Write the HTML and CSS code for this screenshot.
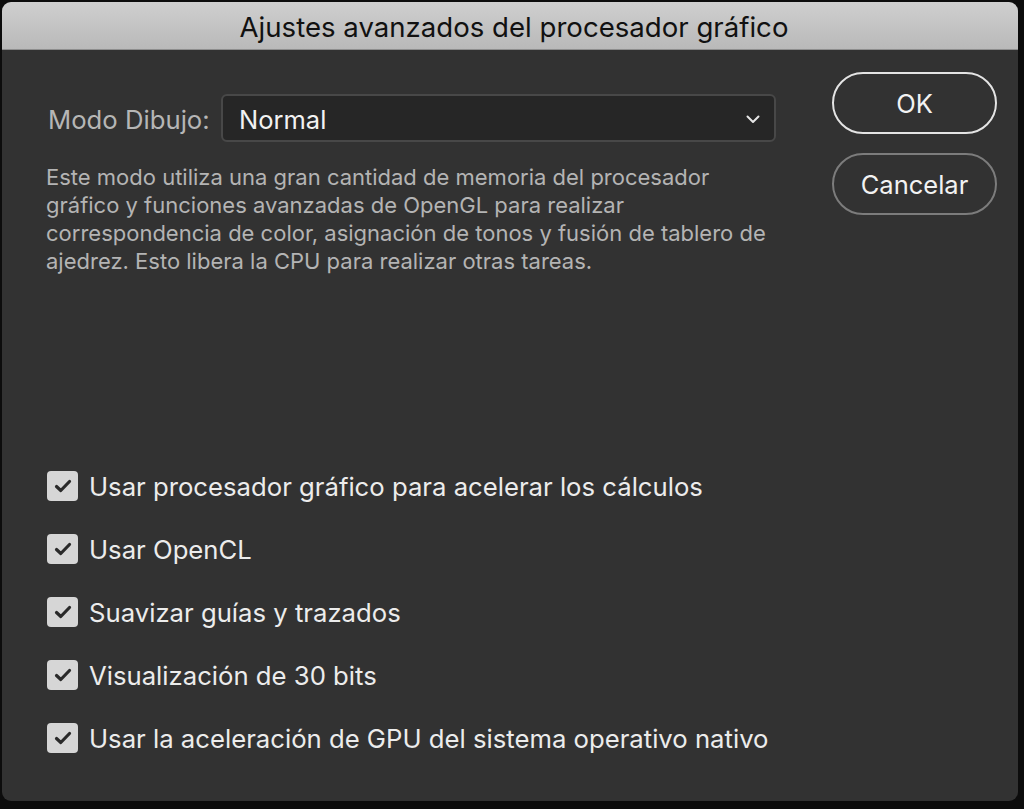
FILE: index.html
```html
<!DOCTYPE html>
<html lang="es">
<head>
<meta charset="utf-8">
<title>Ajustes avanzados del procesador gráfico</title>
<link rel="stylesheet" href="styles.css">
</head>
<body>
<div class="window">
  <div class="titlebar">Ajustes avanzados del procesador gráfico</div>
  <div class="content">
    <div class="main">
      <div class="mode-row">
        <span class="mode-label">Modo Dibujo:</span>
        <div class="select">
          <span class="select-value">Normal</span>
          <svg class="chevron" width="14" height="9" viewBox="0 0 14 9"><path d="M1.5 1.5 L7 7 L12.5 1.5" fill="none" stroke="#e6e6e6" stroke-width="2" stroke-linecap="round" stroke-linejoin="round"/></svg>
        </div>
      </div>
      <p class="desc">Este modo utiliza una gran cantidad de memoria del procesador gráfico y funciones avanzadas de OpenGL para realizar correspondencia de color, asignación de tonos y fusión de tablero de ajedrez. Esto libera la CPU para realizar otras tareas.</p>
      <ul class="checks">
        <li class="check"><span class="box"><svg width="18" height="14" viewBox="0 0 18 14"><path d="M2.5 7.5 L6.8 11.5 L15.5 2.5" fill="none" stroke="#2a2a2a" stroke-width="3.2" stroke-linecap="round" stroke-linejoin="round"/></svg></span>Usar procesador gráfico para acelerar los cálculos</li>
        <li class="check"><span class="box"><svg width="18" height="14" viewBox="0 0 18 14"><path d="M2.5 7.5 L6.8 11.5 L15.5 2.5" fill="none" stroke="#2a2a2a" stroke-width="3.2" stroke-linecap="round" stroke-linejoin="round"/></svg></span>Usar OpenCL</li>
        <li class="check"><span class="box"><svg width="18" height="14" viewBox="0 0 18 14"><path d="M2.5 7.5 L6.8 11.5 L15.5 2.5" fill="none" stroke="#2a2a2a" stroke-width="3.2" stroke-linecap="round" stroke-linejoin="round"/></svg></span>Suavizar guías y trazados</li>
        <li class="check"><span class="box"><svg width="18" height="14" viewBox="0 0 18 14"><path d="M2.5 7.5 L6.8 11.5 L15.5 2.5" fill="none" stroke="#2a2a2a" stroke-width="3.2" stroke-linecap="round" stroke-linejoin="round"/></svg></span>Visualización de 30 bits</li>
        <li class="check"><span class="box"><svg width="18" height="14" viewBox="0 0 18 14"><path d="M2.5 7.5 L6.8 11.5 L15.5 2.5" fill="none" stroke="#2a2a2a" stroke-width="3.2" stroke-linecap="round" stroke-linejoin="round"/></svg></span>Usar la aceleración de GPU del sistema operativo nativo</li>
      </ul>
    </div>
    <div class="actions">
      <button class="btn btn-ok">OK</button>
      <button class="btn btn-cancel">Cancelar</button>
    </div>
  </div>
</div>
</body>
</html>
```
FILE: styles.css
```css
html, body {
  margin: 0;
  padding: 0;
  background: #0c0c0c;
  height: 100%;
}
body {
  font-family: Inter, "Liberation Sans", Arial, sans-serif;
  overflow: hidden;
}
.window {
  margin: 2px 0 0 2px;
  width: 1016px;
  height: 799px;
  border-radius: 9px;
  overflow: hidden;
  background: #323232;
  display: flex;
  flex-direction: column;
}
.titlebar {
  height: 48px;
  box-sizing: border-box;
  flex: none;
  background: linear-gradient(#cfcfcf, #b9b9b9);
  border-bottom: 1px solid #8e8e8e;
  color: #111;
  font-size: 27.6px;
  line-height: 50px;
  text-align: center;
  padding-left: 8px;
}
.content {
  flex: 1;
  display: flex;
  padding: 22px 21px 0 43px;
}
.main {
  flex: 1;
  display: flex;
  flex-direction: column;
}
.mode-row {
  display: flex;
  align-items: center;
  margin-top: 22px;
}
.mode-label {
  color: #b6b6b6;
  font-size: 25.7px;
  margin-left: 3px;
  width: 173px;
  padding-top: 3px;
  white-space: nowrap;
}
.select {
  width: 555px;
  height: 48px;
  box-sizing: border-box;
  border: 2px solid #484848;
  border-radius: 6px;
  background: #262626;
  display: flex;
  align-items: center;
  justify-content: space-between;
  padding: 3px 14px 0 16px;
}
.select-value {
  color: #f2f2f2;
  font-size: 25.5px;
}
.chevron { margin-top: -1px; }
.desc {
  margin: 21px 0 0 1px;
  width: 730px;
  color: #b4b4b4;
  font-size: 22px;
  line-height: 28px;
}
.checks {
  list-style: none;
  margin: 196px 0 0 0;
  padding: 0;
  display: flex;
  flex-direction: column;
  gap: 33px;
}
.check {
  display: flex;
  align-items: center;
  height: 30px;
  color: #ececec;
  font-size: 25.7px;
  white-space: nowrap;
}
.box {
  width: 31px;
  height: 30px;
  border-radius: 4px;
  background: #d6d6d6;
  display: flex;
  align-items: center;
  justify-content: center;
  margin: 0 11px 0 2px;
  flex: none;
}
.actions {
  width: 165px;
  flex: none;
  display: flex;
  flex-direction: column;
  gap: 19px;
  margin-left: 56px;
}
.btn {
  height: 62px;
  border-radius: 31px;
  background: transparent;
  font-family: inherit;
  font-size: 25.5px;
  color: #f2f2f2;
  padding: 0;
}
.btn-ok { border: 2px solid #e4e4e4; }
.btn-cancel { border: 2px solid #7c7c7c; }
```
